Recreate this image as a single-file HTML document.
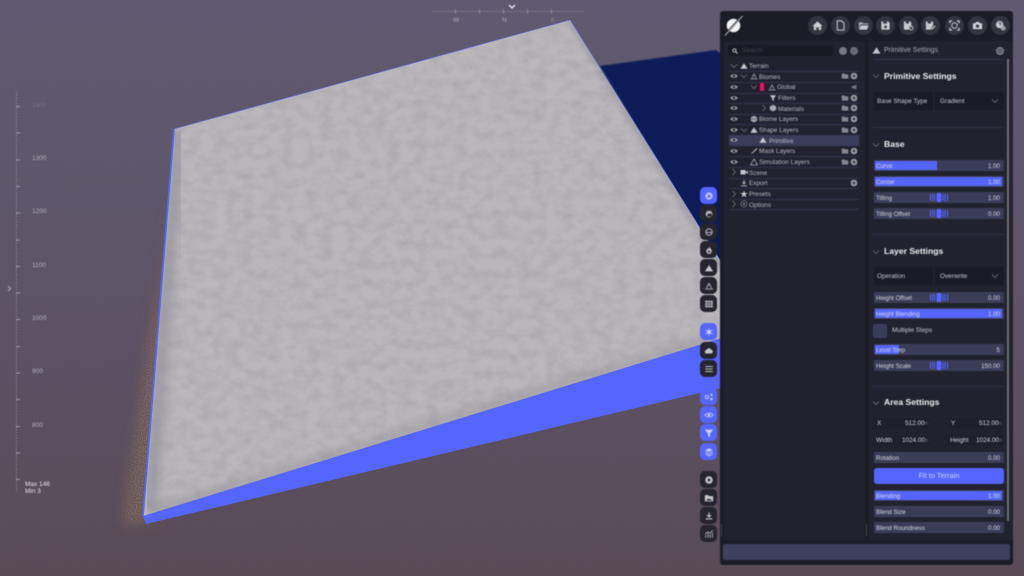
<!DOCTYPE html>
<html><head><meta charset="utf-8">
<style>
html,body{margin:0;padding:0;width:1024px;height:576px;overflow:hidden;background:#5d5366;font-family:"Liberation Sans",sans-serif}
#scene{position:absolute;left:0;top:0}
.a{position:absolute}
#ui{position:absolute;left:0;top:0;width:1024px;height:576px;filter:blur(.4px)}
.t{position:absolute;font-size:6.4px;line-height:10px;color:#b9bac6;white-space:nowrap;margin-top:1px}
.row{position:absolute;left:729px;width:130px;height:10px;border-bottom:1px solid #33344a}
.h{position:absolute;left:884px;font-size:8.6px;line-height:12px;font-weight:bold;color:#eeeef2;white-space:nowrap}
.ln{position:absolute;left:873px;width:131px;height:1px;background:#2f3040}
.s{position:absolute;left:874px;width:130px;height:11px;background:#3b3d58;border-radius:1px;overflow:hidden}
.s i{position:absolute;left:1px;top:1px;bottom:1px;background:#5566ff;display:block}
.s b{position:absolute;left:2px;top:.5px;font-weight:normal;font-size:6.2px;line-height:11px;color:#d4d5e0;white-space:nowrap}
.s u{position:absolute;right:4px;top:1px;text-decoration:none;font-size:6.2px;line-height:11px;color:#d4d5e0}
.s s{position:absolute;left:56px;top:2px;width:18px;height:7px;display:block;text-decoration:none;background:repeating-linear-gradient(90deg,#5566ff 0 1px,transparent 1px 2.1px)}
.s s:after{content:"";position:absolute;left:7px;top:-1px;width:3.5px;height:9px;background:#5566ff}
.d{position:absolute;background:#1b1b27}
.tb{position:absolute;left:700px;width:17px;height:17px;border-radius:5px;background:#25242f}
.tb.on{background:#5566ff}
.tb svg{position:absolute;left:3.5px;top:3.5px;width:10px;height:10px;opacity:.85}
.hb{position:absolute;top:16px;width:19px;height:19px;border-radius:50%;background:#33343f}
.hb svg{position:absolute;left:4px;top:4px;width:11px;height:11px;opacity:.9}
.ic{position:absolute;width:8px;height:8px}
.rl{position:absolute;left:32px;font-size:6.5px;line-height:8px;color:#b4b0ba}
</style></head>
<body>
<svg id="scene" width="1024" height="576" viewBox="0 0 1024 576" xmlns="http://www.w3.org/2000/svg">
<defs>
<linearGradient id="bg" x1="0" y1="0" x2="0" y2="1">
<stop offset="0" stop-color="#5f5a70"/><stop offset=".45" stop-color="#5e5468"/><stop offset="1" stop-color="#574a56"/>
</linearGradient>
<filter id="fine" x="0" y="0" width="100%" height="100%">
<feTurbulence type="fractalNoise" baseFrequency="0.9" numOctaves="2" seed="3"/>
<feColorMatrix values="0 0 0 0 0.15  0 0 0 0 0.13  0 0 0 0 0.15  1.2 0 0 0 -0.45"/>
</filter>
<filter id="halo" x="-60%" y="-10%" width="220%" height="120%">
<feGaussianBlur stdDeviation="6"/>
</filter>
<filter id="speck" x="0" y="0" width="100%" height="100%">
<feTurbulence type="fractalNoise" baseFrequency="1.1" numOctaves="1" seed="8"/>
<feColorMatrix values="0 0 0 0 0.70  0 0 0 0 0.55  0 0 0 0 0.40  2.4 0 0 0 -1.1"/>
</filter>
<filter id="rock" x="0" y="0" width="100%" height="100%">
<feTurbulence type="fractalNoise" baseFrequency="0.075 0.1" numOctaves="3" seed="11"/>
<feColorMatrix values="0 0 0 0 0.36  0 0 0 0 0.35  0 0 0 0 0.38  2 0 0 0 -0.72"/>
</filter>
<filter id="b2"><feGaussianBlur stdDeviation="2"/></filter>
<filter id="b5"><feGaussianBlur stdDeviation="5"/></filter>
<filter id="b1"><feGaussianBlur stdDeviation=".7"/></filter>
<clipPath id="top"><polygon points="174,129 570,20 725,268 725,337 143,516"/></clipPath>
<mask id="hm"><rect width="1024" height="576" fill="#000"/><polygon points="172,240 146,524 122,524 150,340" fill="#fff" filter="url(#halo)"/></mask>
</defs>
<rect width="1024" height="576" fill="url(#bg)"/>
<rect width="1024" height="576" filter="url(#fine)" opacity=".3"/>
<polygon points="122,524 150,330 172,200 160,524" fill="#6f5c50" filter="url(#halo)" opacity=".6"/>
<rect width="1024" height="576" filter="url(#speck)" mask="url(#hm)" opacity=".6"/>
<polygon points="600,66 716,50 730,60 730,300 700,230" fill="#0b1c58" filter="url(#b1)"/>
<polygon points="143,516 725,337 725,387 146,524" fill="#5566ff"/>
<polygon points="174,129 570,20 725,268 725,337 143,516" fill="#bab7bb"/>
<g clip-path="url(#top)">
<rect x="130" y="10" width="600" height="520" filter="url(#rock)" opacity=".52"/>
<polyline points="178,130 150,512" fill="none" stroke="#8d8b95" stroke-width="14" filter="url(#b5)" opacity=".6"/>
<polyline points="150,512 720,336" fill="none" stroke="#8e8c94" stroke-width="8" filter="url(#b5)" opacity=".55"/>
<polyline points="570,22 722,268" fill="none" stroke="#8e8c98" stroke-width="6" filter="url(#b2)" opacity=".45"/>
</g>
<polyline points="174,129 143,516" fill="none" stroke="#5566ff" stroke-width="1.7"/>
<polyline points="174,129 570,20 725,268" fill="none" stroke="#6a78ee" stroke-width=".7" opacity=".8"/>
</svg>

<div id="ui">
<!-- compass -->
<div class="a" style="left:432px;top:11px;width:153px;height:1px;background:repeating-linear-gradient(90deg,#a9a6b4 0 1px,transparent 1px 2.4px);opacity:.6"></div>
<div class="a" style="left:455px;top:9px;width:98px;height:5px;background:repeating-linear-gradient(90deg,#c5c2cc 0 1px,transparent 1px 24px);opacity:.4"></div>
<svg class="a" style="left:508px;top:4px" width="8" height="5"><path d="M1 1L4 4L7 1" fill="none" stroke="#eee" stroke-width="1.3"/></svg>
<div class="t" style="left:453px;top:15px;color:#aaa8b4;font-size:6.5px">W</div>
<div class="t" style="left:502px;top:15px;color:#aaa8b4;font-size:6.5px">N</div>
<div class="t" style="left:551px;top:15px;color:#8d8a98;font-size:6.5px">E</div>

<!-- ruler -->
<div class="a" style="left:16px;top:92px;width:1px;height:400px;background:repeating-linear-gradient(180deg,#d8d4dc 0 1px,transparent 1px 2.7px);opacity:.5"></div>
<div class="a" style="left:16px;top:106px;width:4px;height:385px;background:repeating-linear-gradient(180deg,#d8d4dc 0 1px,transparent 1px 26.65px);opacity:.55"></div>
<div class="rl" style="top:102px;opacity:.3">1400</div>
<div class="rl" style="top:155px">1300</div>
<div class="rl" style="top:208px">1200</div>
<div class="rl" style="top:262px">1100</div>
<div class="rl" style="top:315px">1000</div>
<div class="rl" style="top:368px">900</div>
<div class="rl" style="top:422px">800</div>
<svg class="a" style="left:7px;top:285px" width="5" height="7"><path d="M1 1L3.5 3.5L1 6" fill="none" stroke="#ccc" stroke-width=".8"/></svg>
<div class="a" style="left:25px;top:481px;font-size:6.5px;line-height:7px;color:#e4e2e6">Max 146<br>Min 3</div>

<!-- side toolbar -->
<div class="tb on" style="top:187px"><svg viewBox="0 0 12 12"><circle cx="6" cy="6" r="4.2" fill="#dfe2ff"/><path d="M6 3.2L8.6 7.8H3.4Z" fill="#5566ff"/></svg></div>
<div class="tb" style="top:205px"><svg viewBox="0 0 12 12"><circle cx="6" cy="6" r="4" fill="#cfcfd4"/><path d="M4 7a3 2 0 0 1 5-1v3H4Z" fill="#25242f"/></svg></div>
<div class="tb" style="top:223px"><svg viewBox="0 0 12 12"><circle cx="6" cy="6" r="3.8" fill="none" stroke="#cfcfd4" stroke-width="1.2"/><path d="M3 6.5h6" stroke="#cfcfd4" stroke-width="1.2"/></svg></div>
<div class="tb" style="top:241px"><svg viewBox="0 0 12 12"><path d="M6 1C7 3.5 9.3 4.6 9.3 7.4A3.3 3.4 0 0 1 2.7 7.4C2.7 5.6 4 5 4.4 3.6 5 4 5.4 4.6 5.5 5.2 6.2 4 6.3 2.5 6 1Z" fill="#dcdce0"/><circle cx="6" cy="8" r="1.3" fill="#25242f"/></svg></div>
<div class="tb" style="top:259px"><svg viewBox="0 0 12 12"><path d="M6 2.500L11 10H1Z" fill="#e2e2e6"/></svg></div>
<div class="tb" style="top:277px"><svg viewBox="0 0 12 12"><path d="M1 9.500h10M3 8.500L6 3l3 5.500" fill="none" stroke="#d8d8dc" stroke-width="1.100"/></svg></div>
<div class="tb" style="top:295px"><svg viewBox="0 0 12 12"><path d="M1.500 2h9v8h-9Z" fill="#e2e2e6"/><path d="M1.500 4.700h9M1.500 7.400h9M4.500 2v8M7.500 2v8" stroke="#25242f" stroke-width=".7"/></svg></div>
<div class="tb on" style="top:323px"><svg viewBox="0 0 12 12"><circle cx="6" cy="6" r="2.200" fill="#dfe2ff"/><path d="M6 1v10M1.500 3.500l9 5M1.500 8.500l9-5" stroke="#dfe2ff" stroke-width=".8"/></svg></div>
<div class="tb" style="top:342px"><svg viewBox="0 0 12 12"><path d="M3 9a2 2 0 0 1 0-4 3 3 0 0 1 5.600-.6A2.400 2.400 0 0 1 9 9Z" fill="#e2e2e6"/></svg></div>
<div class="tb" style="top:360px"><svg viewBox="0 0 12 12"><path d="M1.500 3h9M1.500 6h9M1.500 9h9" stroke="#dcdce0" stroke-width="1.100"/></svg></div>
<div class="tb on" style="top:388px"><svg viewBox="0 0 12 12"><circle cx="3.500" cy="6" r="2" fill="none" stroke="#dfe2ff" stroke-width="1.100"/><circle cx="9" cy="3.500" r="1.400" fill="#dfe2ff"/><circle cx="9" cy="8.500" r="1.400" fill="#dfe2ff"/></svg></div>
<div class="tb on" style="top:406px"><svg viewBox="0 0 12 12"><path d="M1 6C3 3 9 3 11 6 9 9 3 9 1 6Z" fill="none" stroke="#dfe2ff" stroke-width="1"/><circle cx="6" cy="6" r="1.500" fill="#dfe2ff"/></svg></div>
<div class="tb on" style="top:424px"><svg viewBox="0 0 12 12"><path d="M1 2h10L7.200 6.500V11L4.800 9.500v-3Z" fill="#e4e6ff"/></svg></div>
<div class="tb on" style="top:443px"><svg viewBox="0 0 12 12"><path d="M6 1.500l4.500 2.300L6 6 1.500 3.800Z" fill="#e4e6ff"/><path d="M1.500 6L6 8.200 10.500 6M1.500 8.200L6 10.500l4.500-2.300" fill="none" stroke="#e4e6ff" stroke-width="1"/></svg></div>
<div class="tb" style="top:471px"><svg viewBox="0 0 12 12"><circle cx="6" cy="6" r="4.500" fill="#e2e2e6"/><circle cx="6" cy="6" r="1.600" fill="#25242f"/></svg></div>
<div class="tb" style="top:489px"><svg viewBox="0 0 12 12"><path d="M1 2.500h4l1 1.200h5V10H1Z" fill="#e2e2e6"/><path d="M3 9l2-2.500 1.500 1.500 1-1L9.500 9Z" fill="#25242f"/></svg></div>
<div class="tb" style="top:507px"><svg viewBox="0 0 12 12"><path d="M6 1.500V7M3.500 4.800L6 7.300l2.500-2.500" fill="none" stroke="#dcdce0" stroke-width="1.300"/><path d="M2 9.500h8" stroke="#dcdce0" stroke-width="1.400"/></svg></div>
<div class="tb" style="top:525px"><svg viewBox="0 0 12 12"><path d="M2 10.500V7M4.700 10.500V5.500M7.300 10.500V6.500M10 10.500V4M1.500 6L4.500 3.500 7 5l3.500-3.500" fill="none" stroke="#d8d8dc" stroke-width="1"/></svg></div>

<!-- main panel -->
<div class="a" style="left:720px;top:11px;width:293px;height:554px;background:#1c1c27;border-radius:3px"></div>
<svg class="a" style="left:723px;top:15px" width="21" height="21" viewBox="0 0 21 21"><circle cx="10.500" cy="10.500" r="6.800" fill="#f2f2f4"/><path d="M2 20L19 1" stroke="#1c1c27" stroke-width="2"/><path d="M2 20.500L19.500 1" stroke="#e8e8ea" stroke-width=".7"/></svg>

<div class="hb" style="left:807.500px"><svg viewBox="0 0 12 12"><path d="M6 1.500L11.500 6.500H10V11H7.300V8H4.700V11H2V6.500H.5Z" fill="#dcdce0"/></svg></div>
<div class="hb" style="left:830.500px"><svg viewBox="0 0 12 12"><path d="M2.500 1h4.700L9.800 3.600V11H2.500Z" fill="none" stroke="#dcdce0" stroke-width="1.100"/></svg></div>
<div class="hb" style="left:853.500px"><svg viewBox="0 0 12 12"><path d="M.8 2.500h4l1 1.200h5.400v1.300H2.800L.8 9.500Z" fill="#aeb0b8"/><path d="M3 6h8.500L10 10.500H1Z" fill="#dcdce0"/></svg></div>
<div class="hb" style="left:875.500px"><svg viewBox="0 0 12 12"><path d="M1.500 1.500h7.300L10.500 3.200v7.300h-9Z" fill="#dcdce0"/><path d="M3.500 1.500h4V4h-4Z" fill="#33343f"/><circle cx="6" cy="7.500" r="1.500" fill="#33343f"/></svg></div>
<div class="hb" style="left:898.500px"><svg viewBox="0 0 12 12"><path d="M1 1.500h6.800L9 2.700V6.500H6.500V10.500H1Z" fill="#dcdce0"/><path d="M3 1.500h3.500V3.800H3Z" fill="#33343f"/><circle cx="9" cy="8.800" r="2" fill="none" stroke="#dcdce0" stroke-width="1"/></svg></div>
<div class="hb" style="left:920.500px"><svg viewBox="0 0 12 12"><path d="M1 1.500h6.800L9 2.700V5.500L6 10.500H1Z" fill="#dcdce0"/><path d="M3 1.500h3.500V3.800H3Z" fill="#33343f"/><path d="M7 10.500L11 6.500" stroke="#dcdce0" stroke-width="1.300"/></svg></div>
<div class="hb" style="left:944.500px"><svg viewBox="0 0 12 12"><path d="M3.500 1H1v2.500M8.500 1H11v2.500M3.500 11H1V8.500M8.500 11H11V8.500" fill="none" stroke="#dcdce0" stroke-width="1.300"/><circle cx="6" cy="6" r="3" fill="none" stroke="#dcdce0" stroke-width="1"/></svg></div>
<div class="hb" style="left:967.500px"><svg viewBox="0 0 12 12"><path d="M1 3.500h2.500L4.500 2h3L8.500 3.500H11V10H1Z" fill="#e4e4e8"/><circle cx="6" cy="6.700" r="1.800" fill="#33343f"/></svg></div>
<div class="hb" style="left:990.500px"><svg viewBox="0 0 12 12"><circle cx="5" cy="5" r="4" fill="#dcdce0"/><circle cx="9" cy="9" r="2.600" fill="#b0b2ba"/><path d="M4 3.800a1.200 1.200 0 1 1 1.400 1.300V6" fill="none" stroke="#33343f" stroke-width=".8"/></svg></div>

<!-- left tree panel -->
<div class="a" style="left:724px;top:41px;width:141px;height:499px;background:#22222e;border-radius:2px"></div>
<div class="a" style="left:728px;top:45px;width:105px;height:11px;background:#191924;border-radius:2px"></div>
<svg class="a" style="left:732px;top:48px" width="6" height="6" viewBox="0 0 6 6"><circle cx="2.400" cy="2.400" r="1.600" fill="none" stroke="#ccc" stroke-width=".8"/><path d="M3.600 3.600L5.500 5.500" stroke="#ccc" stroke-width=".9"/></svg>
<div class="t" style="left:742px;top:45px;color:#43434f">Search</div>
<div class="a" style="left:839px;top:47px;width:8px;height:8px;border-radius:50%;background:#777880"></div>
<div class="a" style="left:850px;top:47px;width:8px;height:8px;border-radius:50%;background:#6a6b72"></div>

<svg width="0" height="0" style="position:absolute"><defs>
<symbol id="eye" viewBox="0 0 8 8"><path d="M.3 4C2 1.500 6 1.500 7.700 4 6 6.500 2 6.500 .3 4Z" fill="#9c9da6"/><circle cx="4" cy="4" r="1.200" fill="#22222e"/></symbol>
<symbol id="fold" viewBox="0 0 8 8"><path d="M.8 1.500h2.700l.8.900h3v4.200H.8Z" fill="#878892"/></symbol>
<symbol id="gear" viewBox="0 0 8 8"><circle cx="4" cy="4" r="3.300" fill="#9c9da6"/><path d="M4 2.200v3.600M2.200 4h3.600" stroke="#22222e" stroke-width=".8"/></symbol>
<symbol id="dn" viewBox="0 0 8 8"><path d="M1 2.500L4 5.500L7 2.500" fill="none" stroke="#7d7e88" stroke-width=".7"/></symbol>
<symbol id="rt" viewBox="0 0 8 8"><path d="M2.500 1L5.500 4L2.500 7" fill="none" stroke="#7d7e88" stroke-width=".7"/></symbol>
<symbol id="tri" viewBox="0 0 8 8"><path d="M4 1.200L7.600 6.800H.4Z" fill="#c5c6ce"/></symbol>
<symbol id="oln" viewBox="0 0 8 8"><path d="M.5 6.800h7M2 5.800L4 2l2 3.800" fill="none" stroke="#a8a9b2" stroke-width=".8"/></symbol>
</defs></svg>

<div class="row" style="top:61px"></div>
<div class="row" style="top:72px"></div>
<div class="row" style="top:83px"></div>
<div class="row" style="top:93px"></div>
<div class="row" style="top:104px"></div>
<div class="row" style="top:114px"></div>
<div class="row" style="top:125px"></div>
<div class="a" style="left:729px;top:135px;width:130px;height:11px;background:#3a3c5a"></div>
<div class="row" style="top:146px"></div>
<div class="row" style="top:157px"></div>
<div class="row" style="top:168px"></div>
<div class="row" style="top:178px"></div>
<div class="row" style="top:189px"></div>
<div class="row" style="top:199px"></div>

<div class="t" style="left:749px;top:61px">Terrain</div>
<div class="t" style="left:759px;top:71.500px">Biomes</div>
<div class="t" style="left:777px;top:82px">Global</div>
<div class="t" style="left:778px;top:93px">Filters</div>
<div class="t" style="left:778px;top:103.500px">Materials</div>
<div class="t" style="left:759px;top:114px">Biome Layers</div>
<div class="t" style="left:759px;top:125px">Shape Layers</div>
<div class="t" style="left:769px;top:135.500px">Primitive</div>
<div class="t" style="left:759px;top:146px">Mask Layers</div>
<div class="t" style="left:759px;top:157px">Simulation Layers</div>
<div class="t" style="left:749px;top:167.500px">Scene</div>
<div class="t" style="left:749px;top:178px">Export</div>
<div class="t" style="left:749px;top:189px">Presets</div>
<div class="t" style="left:749px;top:199.500px">Options</div>

<svg class="ic" style="left:730px;top:72px"><use href="#eye"/></svg>
<svg class="ic" style="left:730px;top:83px"><use href="#eye"/></svg>
<svg class="ic" style="left:730px;top:94px"><use href="#eye"/></svg>
<svg class="ic" style="left:730px;top:104px"><use href="#eye"/></svg>
<svg class="ic" style="left:730px;top:115px"><use href="#eye"/></svg>
<svg class="ic" style="left:730px;top:126px"><use href="#eye"/></svg>
<svg class="ic" style="left:730px;top:136px"><use href="#eye"/></svg>
<svg class="ic" style="left:730px;top:147px"><use href="#eye"/></svg>
<svg class="ic" style="left:730px;top:158px"><use href="#eye"/></svg>

<svg class="ic" style="left:730px;top:62px"><use href="#dn"/></svg>
<svg class="ic" style="left:740px;top:72px"><use href="#dn"/></svg>
<svg class="ic" style="left:750px;top:83px"><use href="#dn"/></svg>
<svg class="ic" style="left:760px;top:104px"><use href="#rt"/></svg>
<svg class="ic" style="left:740px;top:126px"><use href="#dn"/></svg>
<svg class="ic" style="left:730px;top:168px"><use href="#rt"/></svg>
<svg class="ic" style="left:730px;top:190px"><use href="#rt"/></svg>
<svg class="ic" style="left:730px;top:200px"><use href="#rt"/></svg>

<svg class="ic" style="left:740px;top:62px"><use href="#tri"/></svg>
<svg class="ic" style="left:750px;top:72px"><use href="#oln"/></svg>
<div class="a" style="left:760px;top:83px;width:4px;height:8px;background:#f0105f;border-radius:1px"></div>
<svg class="ic" style="left:768px;top:83px"><use href="#oln"/></svg>
<svg class="ic" style="left:769px;top:94px" viewBox="0 0 8 8"><path d="M.8 1.200h6.400L4.800 4.200V7.200L3.200 6V4.200Z" fill="#c5c6ce"/></svg>
<svg class="ic" style="left:769px;top:104px" viewBox="0 0 8 8"><path d="M4 .8L7.200 2.400V5.800L4 7.400.8 5.800V2.400Z" fill="#a8a9b2"/></svg>
<svg class="ic" style="left:750px;top:115px" viewBox="0 0 8 8"><path d="M4 .8L7.200 2.400V5.800L4 7.400.8 5.800V2.400Z" fill="#a8a9b2"/><path d="M1 4h6" stroke="#22222e" stroke-width=".5"/></svg>
<svg class="ic" style="left:750px;top:126px"><use href="#tri"/></svg>
<svg class="ic" style="left:759px;top:136px"><use href="#tri"/></svg>
<svg class="ic" style="left:750px;top:147px" viewBox="0 0 8 8"><path d="M1 7L2.500 4.800 3.500 5.800ZM3 4.500L7 1 7.400 1.600 4 5.200Z" fill="#c5c6ce"/></svg>
<svg class="ic" style="left:750px;top:158px" viewBox="0 0 8 8"><path d="M4 1L7.500 7H.5Z" fill="none" stroke="#a8a9b2" stroke-width=".8"/></svg>
<svg class="ic" style="left:740px;top:168px" viewBox="0 0 8 8"><path d="M.5 2h5v4.500h-5ZM5.800 3.800L7.800 2.500V6L5.800 4.800Z" fill="#c5c6ce"/></svg>
<svg class="ic" style="left:740px;top:179px" viewBox="0 0 8 8"><path d="M4 1V4.800M2.300 3.200L4 5 5.700 3.200M1 6.800h6" fill="none" stroke="#b8b9c2" stroke-width=".9"/></svg>
<svg class="ic" style="left:740px;top:190px" viewBox="0 0 8 8"><path d="M4 .6L5 3H7.600L5.500 4.600 6.300 7.300 4 5.700 1.700 7.300 2.500 4.600.4 3H3Z" fill="#c5c6ce"/></svg>
<svg class="ic" style="left:740px;top:200px" viewBox="0 0 8 8"><circle cx="4" cy="4" r="3" fill="none" stroke="#787983" stroke-width=".8"/><circle cx="4" cy="4" r="1.200" fill="#787983"/></svg>

<svg class="ic" style="left:841px;top:72px"><use href="#fold"/></svg><svg class="ic" style="left:850px;top:72px"><use href="#gear"/></svg>
<svg class="ic" style="left:850px;top:83px" viewBox="0 0 8 8"><path d="M1.500 3.500L6.500 1.500V6.500L1.500 5Z" fill="#6f7079"/></svg>
<svg class="ic" style="left:841px;top:94px"><use href="#fold"/></svg><svg class="ic" style="left:850px;top:94px"><use href="#gear"/></svg>
<svg class="ic" style="left:841px;top:104px"><use href="#fold"/></svg><svg class="ic" style="left:850px;top:104px"><use href="#gear"/></svg>
<svg class="ic" style="left:841px;top:115px"><use href="#fold"/></svg><svg class="ic" style="left:850px;top:115px"><use href="#gear"/></svg>
<svg class="ic" style="left:841px;top:126px"><use href="#fold"/></svg><svg class="ic" style="left:850px;top:126px"><use href="#gear"/></svg>
<svg class="ic" style="left:841px;top:147px"><use href="#fold"/></svg><svg class="ic" style="left:850px;top:147px"><use href="#gear"/></svg>
<svg class="ic" style="left:841px;top:158px"><use href="#fold"/></svg><svg class="ic" style="left:850px;top:158px"><use href="#gear"/></svg>
<svg class="ic" style="left:850px;top:179px"><use href="#gear"/></svg>

<!-- right settings panel -->
<div class="a" style="left:869px;top:41px;width:144px;height:499px;background:#22222e"></div>
<svg class="a" style="left:872px;top:46px" width="9" height="9"><use href="#tri" width="9" height="9"/></svg>
<div class="t" style="left:884px;top:45px;font-size:7px;color:#a9aab4">Primitive Settings</div>
<div class="a" style="left:996px;top:47px;width:8px;height:8px;border-radius:50%;background:#5f6068;border:1px solid #85868e;box-sizing:border-box"></div>
<div class="a" style="left:873px;top:59px;width:131px;height:1px;background:#33344a"></div>
<div class="a" style="left:1007px;top:59px;width:2px;height:462px;background:#6d6e74"></div>

<svg class="ic" style="left:872px;top:72px"><use href="#dn"/></svg>
<div class="h" style="left:884px;top:70px">Primitive Settings</div>
<div class="d" style="left:874px;top:92px;width:59px;height:18px"></div>
<div class="d" style="left:935px;top:92px;width:69px;height:18px"></div>
<div class="t" style="left:877px;top:96px;color:#c8c9d2">Base Shape Type</div>
<div class="t" style="left:940px;top:96px;color:#c8c9d2">Gradient</div>
<svg class="ic" style="left:991px;top:97px"><use href="#dn"/></svg>
<div class="ln" style="top:127px"></div>

<svg class="ic" style="left:872px;top:141px"><use href="#dn"/></svg>
<div class="h" style="top:138px">Base</div>
<div class="s" style="top:160px"><i style="width:62px"></i><b>Curve</b><u>1.00</u></div>
<div class="s" style="top:176px"><i style="width:127px"></i><b>Center</b><u>1.00</u></div>
<div class="s" style="top:192px"><s></s><b>Tilling</b><u>1.00</u></div>
<div class="s" style="top:208px"><s></s><b>Tilling Offset</b><u>0.00</u></div>
<div class="ln" style="top:234px"></div>

<svg class="ic" style="left:872px;top:248px"><use href="#dn"/></svg>
<div class="h" style="top:245px">Layer Settings</div>
<div class="d" style="left:874px;top:267px;width:59px;height:18px"></div>
<div class="d" style="left:935px;top:267px;width:69px;height:18px"></div>
<div class="t" style="left:877px;top:271px;color:#c8c9d2">Operation</div>
<div class="t" style="left:940px;top:271px;color:#c8c9d2">Overwrite</div>
<svg class="ic" style="left:991px;top:272px"><use href="#dn"/></svg>
<div class="s" style="top:292px"><s></s><b>Height Offset</b><u>0.00</u></div>
<div class="s" style="top:308px"><i style="width:127px"></i><b>Height Blending</b><u>1.00</u></div>
<div class="a" style="left:873px;top:324px;width:14px;height:14px;background:#3b3d58;border-radius:2px"></div>
<div class="t" style="left:892px;top:325px;color:#c8c9d2">Multiple Steps</div>
<div class="s" style="top:344px"><i style="width:24px"></i><b>Level Step</b><u>5</u></div>
<div class="s" style="top:360px"><s></s><b>Height Scale</b><u>150.00</u></div>
<div class="ln" style="top:386px"></div>

<svg class="ic" style="left:872px;top:399px"><use href="#dn"/></svg>
<div class="h" style="top:396px">Area Settings</div>
<div class="d" style="left:874px;top:418px;width:56px;height:11px;background:#1f1f2a"></div>
<div class="d" style="left:948px;top:418px;width:56px;height:11px;background:#1f1f2a"></div>
<div class="d" style="left:874px;top:435px;width:56px;height:11px;background:#1f1f2a"></div>
<div class="d" style="left:948px;top:435px;width:56px;height:11px;background:#1f1f2a"></div>
<div class="t" style="left:877px;top:418px;color:#d4d5e0">X</div>
<div class="t" style="left:905px;top:418px;color:#d4d5e0">512.00</div>
<div class="t" style="left:924px;top:418px;color:#6a6b76;font-size:5px">m</div>
<div class="t" style="left:951px;top:418px;color:#d4d5e0">Y</div>
<div class="t" style="left:979px;top:418px;color:#d4d5e0">512.00</div>
<div class="t" style="left:998px;top:418px;color:#6a6b76;font-size:5px">m</div>
<div class="t" style="left:876px;top:435px;color:#d4d5e0">Width</div>
<div class="t" style="left:902px;top:435px;color:#d4d5e0">1024.00</div>
<div class="t" style="left:924px;top:435px;color:#6a6b76;font-size:5px">m</div>
<div class="t" style="left:950px;top:435px;color:#d4d5e0">Height</div>
<div class="t" style="left:976px;top:435px;color:#d4d5e0">1024.00</div>
<div class="t" style="left:998px;top:435px;color:#6a6b76;font-size:5px">m</div>
<div class="s" style="top:452px"><b>Rotation</b><u>0.00</u></div>
<div class="a" style="left:874px;top:468px;width:130px;height:16px;background:#5566ff;border-radius:3px;color:#ccd0ff;font-size:7.400px;line-height:16px;text-align:center">Fit to Terrain</div>
<div class="s" style="top:490px"><i style="width:127px"></i><b>Blending</b><u>1.00</u></div>
<div class="s" style="top:506px"><b>Blend Size</b><u>0.00</u></div>
<div class="s" style="top:522px"><b>Blend Roundness</b><u>0.00</u></div>

<div class="a" style="left:721px;top:525px;width:1px;height:12px;background:repeating-linear-gradient(180deg,#6d6e78 0 1px,transparent 1px 2.500px)"></div>
<div class="a" style="left:866px;top:525px;width:1px;height:12px;background:repeating-linear-gradient(180deg,#6d6e78 0 1px,transparent 1px 2.500px)"></div>
<div class="a" style="left:723px;top:544px;width:287px;height:16px;background:#3d3f5e;border-radius:2px"></div>
</div>
</body></html>
